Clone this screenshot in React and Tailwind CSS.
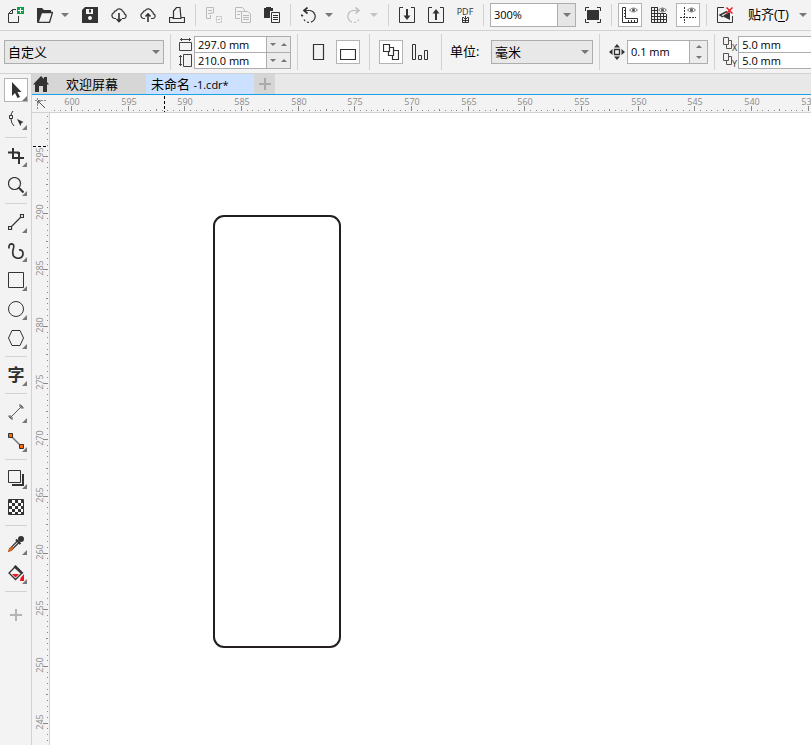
import React, { useState } from "react";

const STEP = 17 / 3;

const Icon = ({ children, size = 16 }) => (
  <svg width={size} height={size} viewBox={`0 0 ${size} ${size}`} fill="none" stroke="#333" className="block shrink-0" aria-hidden="true">
    {children}
  </svg>
);

const Caret = ({ color = "#777", up = false }) => (
  <svg width="8" height="4" viewBox="0 0 8 4" fill={color} className="block shrink-0" aria-hidden="true">
    <path d={up ? "M0 4L4 0L8 4z" : "M0 0H8L4 4z"} />
  </svg>
);

const SmallCaret = ({ up = false }) => (
  <svg width="6" height="3" viewBox="0 0 6 3" fill="#777" className="block shrink-0" aria-hidden="true">
    <path d={up ? "M0 3L3 0L6 3z" : "M0 0H6L3 3z"} />
  </svg>
);

const cloud = "M5 11.5H3.5a3 3 0 0 1-.6-5.8A2.6 2.6 0 0 1 5.2 3.6a3.7 3.7 0 0 1 6.6.8 2.4 2.4 0 0 1 1.6 2.4 2.4 2.4 0 0 1-.4 4.7H11";

const icons = {
  newDoc: (
    <>
      <path d="M8 2.5H4.5L.5 6.5V15.5H10.5V9M4.5 3V6.5H1" />
      <path d="M9 0h7v7H9z" fill="#0d9f48" stroke="none" />
      <path d="M12.5 1v5M10 3.5h5" stroke="#fff" />
    </>
  ),
  open: (
    <>
      <path d="M0 15V1h5l2 2h7v2H5L1 15z" fill="#333" stroke="none" />
      <path d="M4.500 5.500H15.500L12.500 15.500H1z" fill="#f3f3f3" strokeWidth="1.300" />
    </>
  ),
  save: (
    <>
      <path d="M3 0H16V16H0V3z" fill="#333" stroke="none" />
      <path d="M4 2h7v5H4zM8 9a2 2 0 1 0 .01 0z" fill="#f3f3f3" stroke="none" />
      <path d="M7 2.500h2v3H7z" fill="#333" stroke="none" />
    </>
  ),
  cloudDown: (
    <>
      <path d={cloud} strokeWidth="1.200" />
      <path d="M8 6v9M5.500 12L8 14.500L10.500 12" strokeWidth="1.600" />
    </>
  ),
  cloudUp: (
    <>
      <path d={cloud} strokeWidth="1.200" />
      <path d="M8 15V7M5.500 9.500L8 7L10.500 9.500" strokeWidth="1.600" />
    </>
  ),
  print: <path d="M4 10.500H.5V15.500H15.500V10.500H12M4.500 12V4L7.500.5H11L12 11.500M3.500 11.500h9" strokeWidth="1.200" />,
  cut: (
    <g stroke="#bbb">
      <path d="M7.500 4V.5H.5V11.500H4.500V8M2 3.500h4M2 6.500h3M7.500 4v2h-3" />
      <path d="M10.500 9.500H15.500V15.500H10.500z" strokeDasharray="2 1" />
      <path d="M12 12.500h2" />
    </g>
  ),
  copy: (
    <g stroke="#bbb">
      <path d="M5 11.500H.5V.5H7.500L9.500 3V4M2 4.500h4M2 7.500h3" />
      <path d="M6.500 4.500H13L15.500 7V15.500H6.500zM8 8.500h6M8 10.500h6M8 12.500h6" />
    </g>
  ),
  paste: (
    <>
      <path d="M0 1H2V0H7V1H9V4H6V11H0z" fill="#333" stroke="none" />
      <path d="M7.500 5.500H15.500V15.500H7.500zM9 8.500h5M9 10.500h5M9 12.500h5" />
    </>
  ),
  undo: (
    <>
      <path d="M3 3.500H9a6 6 0 1 1-6 9" strokeWidth="1.200" strokeDasharray="22 2 2 2 2 2" />
      <path d="M6.500.5L3 3.500L6.500 6.500M0 8l2 1" strokeWidth="1.700" />
    </>
  ),
  redo: (
    <g stroke="#bbb">
      <path d="M13 3.500H7a6 6 0 1 0 6 9" strokeWidth="1.200" strokeDasharray="22 2 2 2 2 2" />
      <path d="M9.500.5L13 3.500L9.500 6.500" strokeWidth="1.500" />
    </g>
  ),
  importFile: (
    <>
      <path d="M4 .5H.5V15.500H15.500V.5H12" />
      <path d="M8 2v9" strokeWidth="2" />
      <path d="M4.500 8.500H11.500L8 13z" fill="#333" stroke="none" />
    </>
  ),
  exportFile: (
    <>
      <path d="M4 .5H.5V15.500H15.500V.5H12" />
      <path d="M8 4v9" strokeWidth="2" />
      <path d="M4.500 6.500H11.500L8 2z" fill="#333" stroke="none" />
    </>
  ),
  fullScreen: (
    <>
      <path d="M.5 4V.5H4M12 .5h3.500V4M15.500 12v3.500H12M4 15.500H.5V12" />
      <path d="M2 3h12v10H2z" fill="#333" stroke="none" />
    </>
  ),
  rulers: (
    <>
      <path d="M.5.5H3.500V11.500H15.500V15.500H.5zM2 3.500h2M2 6.500h2M2 9.500h2M6.500 13v2M9.500 13v2M12.500 13v2" />
      <path d="M7.500 3Q11.500-1 15.500 3Q11.500 7 7.500 3z" stroke="#777" />
      <circle cx="11.500" cy="3" r="1.500" fill="#555" stroke="none" />
    </>
  ),
  grid: (
    <>
      <path d="M.5.5V15.500H15.500V7M3.500 0v15M6.500 0v15M9.500 6v10M12.500 7v8M0 .5h6M0 3.500h7M0 6.500h15M0 9.500h15M0 12.500h15" />
      <path d="M7.500 3Q11.500-1 15.500 3Q11.500 7 7.500 3z" fill="#f3f3f3" stroke="#777" />
      <circle cx="11.500" cy="3" r="1.500" fill="#555" stroke="none" />
    </>
  ),
  guides: (
    <>
      <path d="M4.500 0v16M0 10.500h16" strokeDasharray="2 1" />
      <path d="M7.500 3Q11.500-1 15.500 3Q11.500 7 7.500 3z" stroke="#777" />
      <circle cx="11.500" cy="3" r="1.500" fill="#555" stroke="none" />
    </>
  ),
  snapOff: (
    <>
      <path d="M7 .5H.5V15.500H15.500V9" />
      <path d="M10 4.500L3 8L6 10" strokeWidth="1.500" />
      <path d="M7 8L13 5V13L6 9.500z" fill="#333" stroke="none" />
      <path d="M9.500.5L15.500 6.500M15.500.5L9.500 6.500" stroke="#e81e25" strokeWidth="1.500" />
    </>
  ),
  nudge: (
    <>
      <path d="M5.500 5.500h5v5h-5z" strokeWidth="1.300" />
      <path d="M8 0L11 3.500H5zM8 16L11 12.500H5zM0 8L3.500 5V11zM16 8L12.500 5V11z" fill="#333" stroke="none" />
    </>
  ),
  pick: <path d="M4 0V14L7 11L9.500 16L12 15L9.500 10H13.500z" fill="#333" stroke="none" />,
  shape: (
    <>
      <path d="M5 0Q3 2 3 5M3 8Q3 12 6 15" />
      <path d="M1.500 4.500h3v3h-3z" />
      <path d="M9 8L15.500 11L13.500 12L12.500 15z" fill="#333" stroke="none" />
    </>
  ),
  crop: <path d="M5 0v10h6v1M0 4.500h10V6M5 10h11M11 4v12M0 4.500h11" strokeWidth="2" />,
  zoom: (
    <>
      <circle cx="6.500" cy="6.500" r="6" strokeWidth="1.200" />
      <path d="M10.500 10.500L15.500 15.500" strokeWidth="2" />
    </>
  ),
  line: <path d="M3.500 12.500L12.500 3.500M.5 12.500h3v3h-3zM12.500.5h3v3h-3z" strokeWidth="1.200" />,
  curve: <path d="M1 5.500Q.5 1 3.500.8Q6.500 1 5.500 5Q4 10 5.500 13Q7.500 15.500 11 15.200Q15.200 14.500 15 10Q14.500 6.500 11 7" strokeWidth="1.700" />,
  rectangle: <path d="M.5.5h15v15H.5z" />,
  ellipse: <circle cx="8" cy="8" r="7.500" />,
  polygon: <path d="M4 .5H12L15.500 8L12 15.500H4L.5 8z" />,
  dimension: <path d="M2 14L14 2M0 11.500L4.500 16M11.500 0L16 4.500M2 11v3h3M11 2h3v3" stroke="#555" />,
  connector: (
    <>
      <path d="M3 3L13 13" stroke="#777" strokeWidth="1.500" />
      <path d="M.5.5h4v4h-4zM11.500 11.500h4v4h-4z" fill="#ff6a00" />
    </>
  ),
  shadow: (
    <>
      <path d="M15 4v11H4" strokeWidth="2" />
      <path d="M.5.5h12v12H.5z" fill="#f3f3f3" />
    </>
  ),
  transparency: (
    <>
      <path d="M.5.5h15v15H.5z" fill="#fff" />
      {Array.from({ length: 25 }, (_, i) => i).map((i) =>
        i % 2 === 0 ? (
          <path key={i} d={`M${(i % 5) * 3 + 1} ${Math.floor(i / 5) * 3 + 1}h3v3h-3z`} fill="#333" stroke="none" />
        ) : null
      )}
    </>
  ),
  dropper: (
    <>
      <path d="M9.500 5L2 12.500L1 15L3.500 14L11 6.500" strokeWidth="1.200" />
      <path d="M0 16L1 12L4 10.500L5.500 12L3.500 15z" fill="#d9641e" stroke="none" />
      <path d="M8 3.500L12.500 8" strokeWidth="2" />
      <circle cx="13" cy="3" r="3" fill="#333" stroke="none" />
    </>
  ),
  fill: (
    <>
      <path d="M7.500 1.500L14 8L7.500 14.500L1 8z" fill="#f3f3f3" strokeWidth="1.300" />
      <path d="M5.500 2L7.500 0L15.500 8L13 9z" fill="#333" stroke="none" />
      <path d="M4 9h7L7.500 12.500zM16 9v7h-4L12.500 13z" fill="#f0141e" stroke="none" />
    </>
  ),
};

const ToolButton = ({ icon, label, pressed = false, onClick }) => (
  <button aria-label={label} onClick={onClick} className="w-[29px] h-[30px] shrink-0 flex items-center pl-0.5">
    <span className={`w-6 h-6 flex items-center justify-center ${pressed ? "bg-white outline outline-1 -outline-offset-1 outline-[#b4b4b4]" : ""}`}>
      <Icon>{icons[icon]}</Icon>
    </span>
  </button>
);

const ArrowButton = ({ label, color }) => (
  <button aria-label={label} className="w-4 h-[30px] shrink-0 pl-px flex items-center">
    <Caret color={color} />
  </button>
);

const Separator = () => <span className="w-2 h-[22px] shrink-0 pl-[3px]"><span className="block w-px h-full bg-[#d2d2d2]" /></span>;

const TallSeparator = () => <span className="w-px h-9 shrink-0 bg-[#d2d2d2]" />;

const StandardBar = () => {
  const [zoom, setZoom] = useState("300%");
  const [visible, setVisible] = useState({ rulers: true, grid: false, guides: true });
  const toggle = (key) => setVisible((prev) => ({ ...prev, [key]: !prev[key] }));

  return (
    <header className="flex items-center pl-0.5 border-b border-[#d2d2d2] overflow-hidden">
      <ToolButton icon="newDoc" label="新建" />
      <ToolButton icon="open" label="打开" />
      <ArrowButton label="最近打开" />
      <ToolButton icon="save" label="保存" />
      <ToolButton icon="cloudDown" label="从云中打开" />
      <ToolButton icon="cloudUp" label="保存到云" />
      <ToolButton icon="print" label="打印" />
      <Separator />
      <ToolButton icon="cut" label="剪切" />
      <ToolButton icon="copy" label="复制" />
      <ToolButton icon="paste" label="粘贴" />
      <Separator />
      <ToolButton icon="undo" label="撤消" />
      <ArrowButton label="撤消列表" />
      <ToolButton icon="redo" label="重做" />
      <ArrowButton label="重做列表" color="#c4c4c4" />
      <Separator />
      <ToolButton icon="importFile" label="导入" />
      <ToolButton icon="exportFile" label="导出" />
      <button aria-label="发布为 PDF" className="w-[29px] h-[30px] shrink-0 flex flex-col items-center justify-center pr-px text-[9px] leading-[9px] text-[#333]">
        <span>PDF</span>
        <svg width="7" height="7" viewBox="0 0 7 7" fill="none" stroke="#333" aria-hidden="true">
          <path d="M2 1.500H.5V6.500H6.500V1.500H5M3.500 0v6M2 2.500h3M1 4.500h5" />
        </svg>
      </button>
      <Separator />
      <div className="ml-0.5 mr-[3px] w-[86px] h-6 shrink-0 flex border border-[#adadad] bg-white">
        <input aria-label="缩放级别" value={zoom} onChange={(e) => setZoom(e.target.value)} className="min-w-0 flex-1 pl-[3px] outline-none text-[11px]" />
        <button aria-label="缩放列表" className="w-[18px] border-l border-[#adadad] bg-[#e6e6e6] flex items-center justify-center">
          <Caret />
        </button>
      </div>
      <ToolButton icon="fullScreen" label="全屏预览" />
      <Separator />
      <ToolButton icon="rulers" label="标尺" pressed={visible.rulers} onClick={() => toggle("rulers")} />
      <ToolButton icon="grid" label="网格" pressed={visible.grid} onClick={() => toggle("grid")} />
      <ToolButton icon="guides" label="辅助线" pressed={visible.guides} onClick={() => toggle("guides")} />
      <Separator />
      <ToolButton icon="snapOff" label="关闭贴齐" />
      <button className="ml-2 shrink-0 flex items-center gap-2.5 text-[13px] whitespace-nowrap">
        <span>贴齐(<u className="underline-offset-2">T</u>)</span>
        <Caret />
      </button>
    </header>
  );
};

const Select = ({ label, className, children }) => (
  <span className={`grid items-center shrink-0 ${className}`}>
    <select aria-label={label} className="col-start-1 row-start-1 w-full h-6 pl-[3px] appearance-none border border-[#adadad] bg-[#e8e8e8] text-[13px] leading-5 outline-none">
      {children}
    </select>
    <span className="col-start-1 row-start-1 justify-self-end pr-1 pointer-events-none">
      <Caret />
    </span>
  </span>
);

const SizeField = ({ label, value, className = "" }) => (
  <div className={`flex ${className}`}>
    <input aria-label={label} defaultValue={value} className="min-w-0 flex-1 bg-white pl-[3px] text-[11px] leading-4 outline-none" />
    <span className="w-6 flex border-l border-[#adadad] bg-[#ececec]">
      <button aria-label={`减小${label}`} className="flex-1 flex items-center justify-center"><SmallCaret /></button>
      <button aria-label={`增大${label}`} className="flex-1 flex items-center justify-center"><SmallCaret up /></button>
    </span>
  </div>
);

const PropertyBar = () => (
  <section className="flex items-center h-[43px] pl-1 border-b border-[#d2d2d2] overflow-hidden">
    <Select label="页面大小" className="w-40 mr-1.5">
      <option>自定义</option>
    </Select>
    <TallSeparator />
    <svg width="14" height="32" viewBox="0 0 14 32" fill="none" stroke="#444" className="ml-2 mr-px shrink-0" aria-hidden="true">
      <path d="M.5 6.500h12v8H.5zM1 3.500h11M2.500 2v3M10.500 2v3" />
      <path d="M4.500 18.500h8v12h-8zM1.500 19v11M0 20.500h3M0 28.500h3" />
    </svg>
    <div className="w-[97px] mt-px shrink-0 border border-[#adadad]">
      <SizeField label="页面宽度" value="297.0 mm" className="h-4 border-b border-[#adadad]" />
      <SizeField label="页面高度" value="210.0 mm" className="h-[15px]" />
    </div>
    <span className="w-1.5 shrink-0" />
    <TallSeparator />
    <button aria-label="纵向" className="w-6 h-6 ml-2 shrink-0 flex items-center justify-center">
      <Icon><path d="M3.500.5h10v15h-10z" strokeWidth="1.200" /></Icon>
    </button>
    <button aria-label="横向" className="w-6 h-6 ml-1.5 mr-[9px] shrink-0 flex items-center justify-center border border-[#b4b4b4] bg-white">
      <Icon><path d="M.5 5.500h15v10H.5z" strokeWidth="1.200" /></Icon>
    </button>
    <TallSeparator />
    <button aria-label="所有页面" className="w-6 h-6 ml-[9px] shrink-0 flex items-center justify-center border border-[#b4b4b4] bg-white">
      <Icon>
        <path d="M.5.5h6v7h-6zM6.500 3.500H10.500V11.500H5.500V8M11 6.500h4.500v9h-6V12" strokeWidth="1.200" />
      </Icon>
    </button>
    <button aria-label="当前页面" className="w-6 h-6 ml-[5px] mr-[9px] shrink-0 flex items-center justify-center">
      <Icon><path d="M.5.5h3v15h-3zM6.500 11.500h3v4h-3zM12.500 6.500h3v9h-3z" /></Icon>
    </button>
    <TallSeparator />
    <label className="ml-2 flex items-center shrink-0 text-[13px]">
      <span className="w-[41px]">单位:</span>
      <Select label="单位" className="w-[102px]">
        <option>毫米</option>
        <option>厘米</option>
      </Select>
    </label>
    <span className="w-1.5 shrink-0" />
    <TallSeparator />
    <span className="ml-[9px] mr-0.5"><Icon>{icons.nudge}</Icon></span>
    <div className="w-[81px] h-6 mr-1.5 shrink-0 flex border border-[#adadad] bg-white">
      <input aria-label="微调距离" defaultValue="0.1 mm" className="min-w-0 flex-1 pl-[3px] text-[11px] outline-none" />
      <span className="w-[18px] flex flex-col border-l border-[#adadad] bg-[#ececec]">
        <button aria-label="增大微调" className="flex-1 flex items-center justify-center"><SmallCaret up /></button>
        <button aria-label="减小微调" className="flex-1 flex items-center justify-center"><SmallCaret /></button>
      </span>
    </div>
    <TallSeparator />
    <div className="ml-2 mr-px flex flex-col gap-0.5 shrink-0 text-[#333]">
      {["X", "Y"].map((axis) => (
        <span key={axis} className="flex items-end h-[14px]">
          <svg width="9" height="14" viewBox="0 0 9 14" fill="none" stroke="#555" aria-hidden="true">
            <path d="M.5.5h5v7h-5zM6 3.500h2.500v8h-5V8" />
          </svg>
          <span className="text-[9px] leading-[7px]">{axis}</span>
        </span>
      ))}
    </div>
    <div className="flex-1 min-w-[73px] mt-px border border-r-0 border-[#adadad] bg-white text-[11px]">
      <input aria-label="再制距离 X" defaultValue="5.0 mm" className="block w-full h-4 pl-[3px] border-b border-[#adadad] outline-none leading-4" />
      <input aria-label="再制距离 Y" defaultValue="5.0 mm" className="block w-full h-[15px] pl-[3px] outline-none leading-4" />
    </div>
  </section>
);

const toolGroups = [
  ["pick", "shape"],
  ["crop", "zoom"],
  ["line", "curve", "rectangle", "ellipse", "polygon"],
  ["text"],
  ["dimension", "connector"],
  ["shadow", "transparency"],
  ["dropper", "fill"],
];

const toolLabels = {
  pick: "选择", shape: "形状", crop: "裁剪", zoom: "缩放", line: "手绘", curve: "艺术笔触",
  rectangle: "矩形", ellipse: "椭圆形", polygon: "多边形", text: "文本", dimension: "平行度量",
  connector: "连接器", shadow: "阴影", transparency: "透明度", dropper: "颜色滴管", fill: "交互式填充",
};

const Toolbox = () => {
  const [active, setActive] = useState("pick");

  return (
    <aside className="w-8 shrink-0 pt-0.5 border-r border-[#d2d2d2]">
      {toolGroups.map((group) => (
        <div key={group[0]}>
          {group.map((tool) => (
            <button key={tool} aria-label={toolLabels[tool]} onClick={() => setActive(tool)} className="w-full h-[29px] pl-1 pb-[1px] flex items-center">
              <span className={`relative w-6 h-6 flex items-center justify-center ${active === tool ? "bg-white outline outline-1 -outline-offset-1 outline-[#b4b4b4]" : ""}`}>
                {tool === "text" ? <b className="text-[17px] leading-6 text-[#333]">字</b> : <Icon>{icons[tool]}</Icon>}
                {tool !== "transparency" && (
                  <svg width="5" height="5" viewBox="0 0 5 5" className="absolute bottom-px right-px" fill="#777" aria-hidden="true">
                    <path d="M5 0V5H0z" />
                  </svg>
                )}
              </span>
            </button>
          ))}
          <hr className="mt-[3px] mb-1 ml-[5px] mr-1 border-[#d2d2d2]" />
        </div>
      ))}
      <button aria-label="快速自定义" className="w-full h-[38px] pl-2 flex items-center">
        <Icon><path d="M8 2v12M2 8h12" stroke="#b4b4b4" strokeWidth="2" /></Icon>
      </button>
    </aside>
  );
};

const DocumentTabs = () => (
  <nav className="flex h-[21px] bg-[#e8e8e8] border-b border-[#1ba1e8] text-[13px] leading-5">
    <button aria-label="主页" className="w-[18px] bg-[#d6d6d6] flex items-center justify-center">
      <svg width="16" height="16" viewBox="0 0 16 16" fill="#333" aria-hidden="true">
        <path d="M8 0L11 3V1h3v5l2 2.500H14V16H10V10H6V16H2V8.500H0z" />
      </svg>
    </button>
    <button className="w-24 pl-4 text-left bg-[#d6d6d6]">欢迎屏幕</button>
    <button className="w-[108px] pl-[5px] text-left bg-[#cce0ff]">
      未命名 <span className="text-[11px]">-1.cdr*</span>
    </button>
    <button aria-label="新建文档" className="w-[21px] bg-[#d6d6d6] flex items-center justify-center">
      <svg width="12" height="12" viewBox="0 0 12 12" stroke="#aaa" strokeWidth="2" aria-hidden="true">
        <path d="M6 0v12M0 6h12" />
      </svg>
    </button>
  </nav>
);

// half-millimetre ticks that fit into a ruler of this length
const ticksFor = (origin, length) => {
  const first = -Math.floor(origin / STEP);
  const last = Math.floor((length - origin) / STEP);
  return Array.from({ length: last - first + 1 }, (_, i) => i + first);
};

const tickLength = (i) => {
  if (i % 10 === 0) return 5;
  return i % 5 === 0 ? 2 : 1;
};

const HorizontalRuler = () => (
  <svg width="100%" height="17" className="block flex-1 min-w-0" shapeRendering="crispEdges" aria-label="水平标尺">
    {ticksFor(21, window.innerWidth - 50).map((i) => {
      const x = Math.round(21 + i * STEP);
      return (
        <React.Fragment key={i}>
          <rect x={x} y={16 - tickLength(i)} width="1" height={tickLength(i)} fill="#888" />
          {i % 10 === 0 && (
            <text x={x + 1} y="10" textAnchor="middle" fontSize="9" fill="#8c8c8c">{600 - i / 2}</text>
          )}
        </React.Fragment>
      );
    })}
    <path d="M114.500 1V17" stroke="#000" strokeDasharray="3 2" />
  </svg>
);

const VerticalRuler = () => (
  <svg width="17" height="100%" className="block shrink-0" shapeRendering="crispEdges" aria-label="垂直标尺">
    {ticksFor(43, window.innerHeight - 113).map((i) => {
      const y = Math.round(43 + i * STEP);
      return (
        <React.Fragment key={i}>
          <rect x={16 - tickLength(i)} y={y} width={tickLength(i)} height="1" fill="#888" />
          {i % 10 === 0 && (
            <text transform={`translate(11 ${y - 1}) rotate(-90)`} textAnchor="middle" fontSize="9" fill="#8c8c8c">{295 - i / 2}</text>
          )}
        </React.Fragment>
      );
    })}
    <path d="M1 33.500H16" stroke="#000" strokeDasharray="3 2" />
  </svg>
);

const Workspace = () => (
  <main className="flex-1 min-w-0 flex flex-col">
    <DocumentTabs />
    <div className="flex h-[18px] shrink-0 border-b border-[#d2d2d2]">
      <button aria-label="标尺原点" className="w-[18px] flex items-center justify-center">
        <svg width="12" height="12" viewBox="0 0 12 12" fill="none" stroke="#888" aria-hidden="true">
          <path d="M0 2.500h11M2.500 0v11" strokeDasharray="2 1" />
          <path d="M3 3l7 7M3 6V3h3" stroke="#555" />
        </svg>
      </button>
      <HorizontalRuler />
    </div>
    <div className="flex flex-1 min-h-0">
      <VerticalRuler />
      <div className="relative flex-1 bg-white border-l border-[#d2d2d2] overflow-hidden">
        <div className="absolute left-[163px] top-[102px] w-32 h-[433px] rounded-[11px] border-2 border-[#231f20]" />
      </div>
    </div>
  </main>
);

const App = () => (
  <div className="h-screen flex flex-col overflow-hidden bg-[#f3f3f3] text-black font-['Open_Sans','Noto_Sans_CJK_SC',sans-serif]">
    <StandardBar />
    <PropertyBar />
    <div className="flex flex-1 min-h-0">
      <Toolbox />
      <Workspace />
    </div>
  </div>
);

export default App;
